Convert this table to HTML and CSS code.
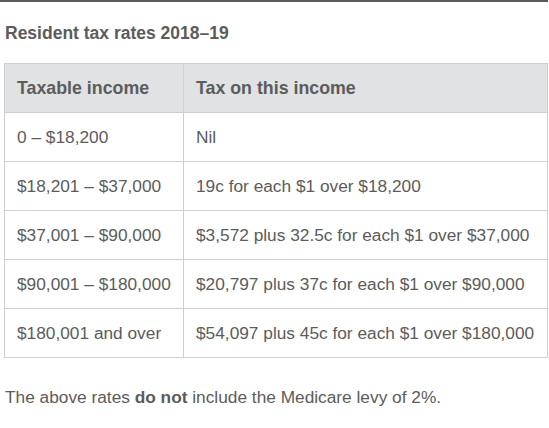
FILE: index.html
```html
<!DOCTYPE html>
<html>
<head>
<meta charset="utf-8">
<link rel="stylesheet" href="styles.css">
</head>
<body>
<div class="page">
  <div class="topbar"></div>
  <h2 class="title">Resident tax rates 2018–19</h2>
  <table class="rates">
    <thead>
      <tr><th class="c1">Taxable income</th><th>Tax on this income</th></tr>
    </thead>
    <tbody>
      <tr><td class="c1">0 – $18,200</td><td>Nil</td></tr>
      <tr><td class="c1">$18,201 – $37,000</td><td>19c for each $1 over $18,200</td></tr>
      <tr><td class="c1">$37,001 – $90,000</td><td>$3,572 plus 32.5c for each $1 over $37,000</td></tr>
      <tr><td class="c1">$90,001 – $180,000</td><td>$20,797 plus 37c for each $1 over $90,000</td></tr>
      <tr><td class="c1">$180,001 and over</td><td>$54,097 plus 45c for each $1 over $180,000</td></tr>
    </tbody>
  </table>
  <p class="note">The above rates <strong>do not</strong> include the Medicare levy of 2%.</p>
</div>
</body>
</html>
```
FILE: styles.css
```css
html, body { margin: 0; padding: 0; background: #fff; }
body { font-family: "Liberation Sans", Arial, sans-serif; color: #5c5c5c; }
.page { width: 548px; }
.topbar { height: 2px; background: #5a5a5a; }
.title { margin: 22px 0 0 5px; font-size: 17.5px; line-height: 18px; font-weight: bold; color: #5c5c5c; }
.rates { margin: 21px 0 0 4px; border-collapse: collapse; width: 544px; table-layout: fixed; font-size: 17.3px; }
.rates th, .rates td { border: 1px solid #cfcfcf; text-align: left; padding: 0 0 0 12px; height: 48px; white-space: nowrap; }
.rates th { background: #e0e2e3; font-weight: bold; font-size: 17.8px; }
.rates .c1 { width: 166px; }
.note { margin: 29px 0 0 5px; font-size: 17.3px; }
.note strong { font-weight: bold; }
```
